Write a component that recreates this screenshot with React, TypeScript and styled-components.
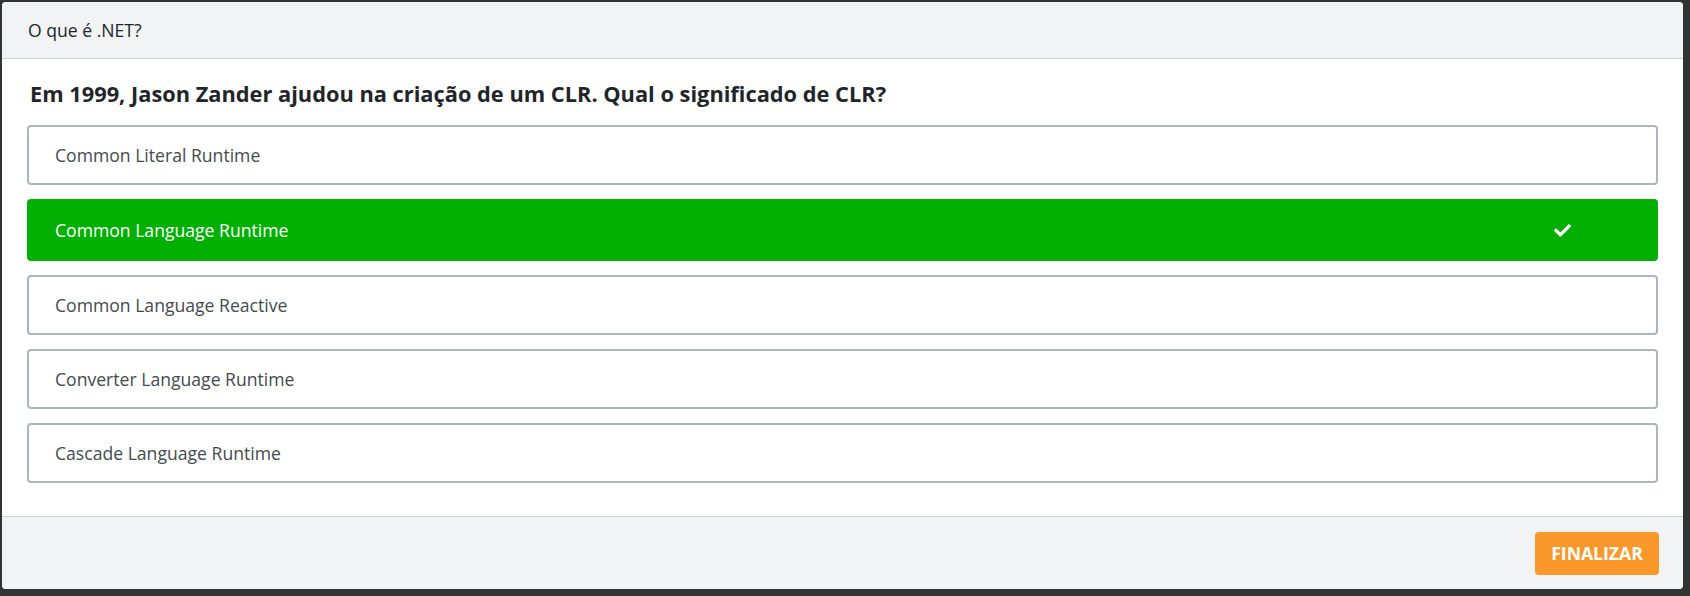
import React from 'react';
import styled, { createGlobalStyle } from 'styled-components';
import { FaCheck } from 'react-icons/fa';

const GlobalStyle = createGlobalStyle`
  html, body {
    margin: 0;
    padding: 0;
    background-color: #333333;
    font-family: 'Open Sans', 'Noto Sans', sans-serif;
  }
`;

const Page = styled.div`
  padding: 2px 7px 7px 2px;
  box-sizing: border-box;
  width: 1690px;
  height: 596px;
`;

const Modal = styled.section`
  display: flex;
  flex-direction: column;
  height: 100%;
  background-color: white;
  border-radius: 4px;
  overflow: hidden;
`;

const Header = styled.header`
  height: 56px;
  display: flex;
  align-items: center;
  padding: 0 26px;
  background-color: #f2f3f5;
  border-bottom: 1px solid #cdd0d4;
  font-size: 17.6px;
  color: #212529;
`;

const Body = styled.div`
  flex: 1;
  padding: 18px 25px 0 25px;
`;

const Question = styled.h2`
  margin: 0 0 14px 3px;
  font-size: 21.8px;
  line-height: 34px;
  font-weight: 700;
  color: #212529;
`;

const Options = styled.div`
  display: flex;
  flex-direction: column;
  gap: 14px;
`;

const Option = styled.button<{ correct?: boolean }>`
  display: flex;
  align-items: center;
  justify-content: space-between;
  height: ${p => (p.correct ? '62px' : '60px')};
  padding: 0 85px 0 26px;
  box-sizing: border-box;
  border-radius: 4px;
  border: 2px solid ${p => (p.correct ? '#00af00' : '#adb5bd')};
  background-color: ${p => (p.correct ? '#00af00' : 'white')};
  color: ${p => (p.correct ? 'white' : '#444a50')};
  font-family: inherit;
  font-size: 17.6px;
  text-align: left;
  cursor: pointer;
`;

const Footer = styled.footer`
  height: 72px;
  display: flex;
  align-items: center;
  justify-content: flex-end;
  padding: 0 24px;
  background-color: #f2f3f5;
  border-top: 1px solid #cdd0d4;
`;

const FinishButton = styled.button`
  height: 43px;
  width: 124px;
  border: none;
  border-radius: 4px;
  background-color: #fa982c;
  color: white;
  font-family: inherit;
  font-size: 17.6px;
  font-weight: 700;
  cursor: pointer;
`;

export default function App() {
  const options = [
    { id: 'a', text: 'Common Literal Runtime' },
    { id: 'b', text: 'Common Language Runtime', correct: true },
    { id: 'c', text: 'Common Language Reactive' },
    { id: 'd', text: 'Converter Language Runtime' },
    { id: 'e', text: 'Cascade Language Runtime' }
  ];

  return (
    <Page>
      <GlobalStyle />
      <Modal>
        <Header>O que é .NET?</Header>
        <Body>
          <Question>
            Em 1999, Jason Zander ajudou na criação de um CLR. Qual o significado de CLR?
          </Question>
          <Options>
            {options.map(option => (
              <Option key={option.id} correct={option.correct}>
                <span>{option.text}</span>
                {option.correct && <FaCheck size={17} />}
              </Option>
            ))}
          </Options>
        </Body>
        <Footer>
          <FinishButton>FINALIZAR</FinishButton>
        </Footer>
      </Modal>
    </Page>
  );
}
